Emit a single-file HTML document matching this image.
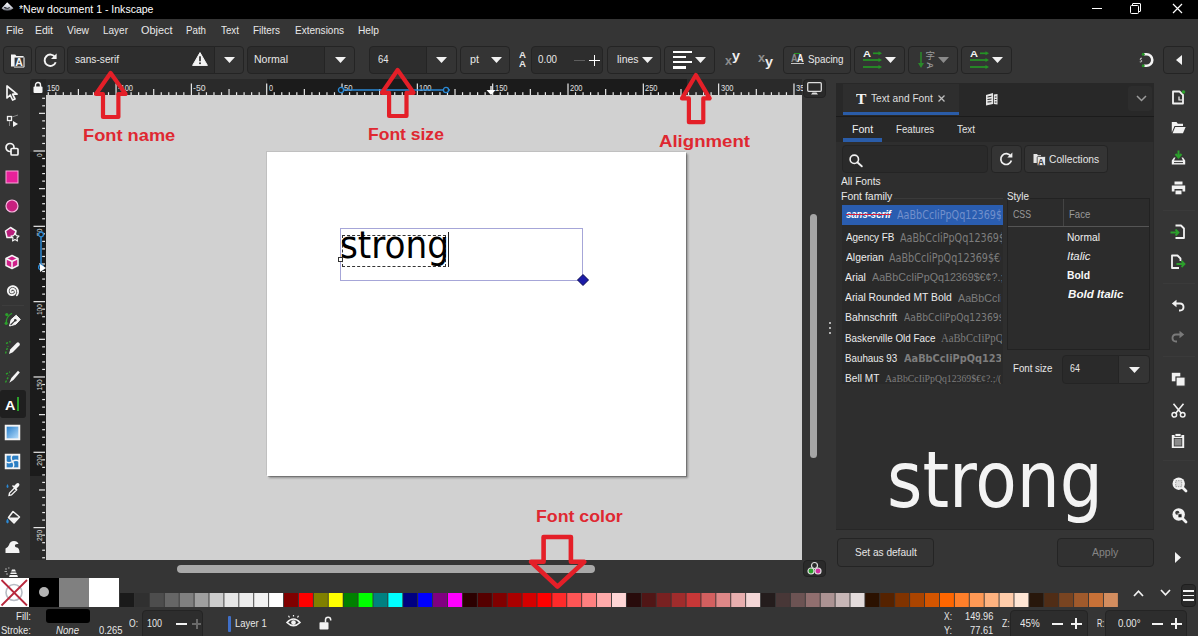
<!DOCTYPE html>
<html lang="en">
<head>
<meta charset="utf-8">
<title>Inkscape - Text and Font</title>
<style>
*{box-sizing:border-box;margin:0;padding:0}
html,body{width:1200px;height:636px;overflow:hidden;background:#353535}
body{position:relative;font-family:"Liberation Sans","DejaVu Sans",sans-serif;font-size:12px;color:#e8e8e8}
div,span,svg{position:absolute}
svg{overflow:visible}
.f{white-space:nowrap;transform-origin:0 50%}
.btn{background:#343434;border:1px solid #242424;border-radius:4px}
</style>
</head>
<body>
<div style="left:0px;top:0px;width:1198px;height:19px;background:#000;"></div>
<div style="left:1198px;top:0px;width:2px;height:636px;background:#353535;"></div>
<svg style="left:0px;top:0px;" width="16" height="14" viewBox="0 0 16 14"><defs><linearGradient id="lg0" x1="0" y1="0" x2="0" y2="1"><stop offset="0" stop-color="#ffffff"/><stop offset=".65" stop-color="#c9ccd6"/><stop offset="1" stop-color="#4a4d55"/></linearGradient></defs><path d="M7.2 2.2 L13.4 8.2 Q10.5 10.9 7.3 10.7 Q4 10.9 1.6 8.2 Z" fill="url(#lg0)"/><path d="M3.6 7.6 Q5 6.6 6.2 7.6 Q7.4 8.4 8.6 7.5 Q9.6 6.9 10.2 7.8 Q8 9 6.5 8.6 Q5 8.8 3.6 7.6 Z" fill="#15161c"/></svg>
<span class="f" style="left:18.5px;top:2px;font-size:11px;line-height:14px;transform:scaleX(0.956);color:#fff;">*New document 1 - Inkscape</span>
<div style="left:1092px;top:8px;width:10px;height:1px;background:#fff;"></div>
<svg style="left:1130px;top:3px;" width="11" height="11" viewBox="0 0 11 11"><path d="M2.5 2.5 V1 Q2.5 .5 3 .5 H10 Q10.5 .5 10.5 1 V8 Q10.5 8.5 10 8.5 H8.5" fill="none" stroke="#fff" stroke-width="1"/><rect x=".5" y="2.5" width="8" height="8" rx="1" fill="none" stroke="#fff" stroke-width="1"/></svg>
<svg style="left:1172px;top:3px;" width="11" height="11" viewBox="0 0 11 11"><path d="M1 1 L10 10 M10 1 L1 10" stroke="#fff" stroke-width="1.2"/></svg>
<div style="left:0px;top:19px;width:1198px;height:23px;background:#353535;"></div>
<span class="f" style="left:5.5px;top:23px;font-size:11px;line-height:14px;transform:scaleX(0.987);">File</span>
<span class="f" style="left:35px;top:23px;font-size:11px;line-height:14px;transform:scaleX(0.950);">Edit</span>
<span class="f" style="left:66.5px;top:23px;font-size:11px;line-height:14px;transform:scaleX(0.930);">View</span>
<span class="f" style="left:103px;top:23px;font-size:11px;line-height:14px;transform:scaleX(0.909);">Layer</span>
<span class="f" style="left:141px;top:23px;font-size:11px;line-height:14px;transform:scaleX(0.991);">Object</span>
<span class="f" style="left:186px;top:23px;font-size:11px;line-height:14px;transform:scaleX(0.884);">Path</span>
<span class="f" style="left:220.5px;top:23px;font-size:11px;line-height:14px;transform:scaleX(0.892);">Text</span>
<span class="f" style="left:253px;top:23px;font-size:11px;line-height:14px;transform:scaleX(0.902);">Filters</span>
<span class="f" style="left:294.5px;top:23px;font-size:11px;line-height:14px;transform:scaleX(0.911);">Extensions</span>
<span class="f" style="left:358px;top:23px;font-size:11px;line-height:14px;transform:scaleX(0.928);">Help</span>
<div style="left:0px;top:42px;width:1198px;height:37px;background:#353535;"></div>
<div class="btn" style="left:3px;top:46px;width:29px;height:28px;"></div>
<div class="btn" style="left:35px;top:46px;width:30px;height:28px;"></div>
<div class="btn" style="left:67px;top:46px;width:148px;height:28px;border-radius:4px 0 0 4px;background:#2d2d2d;"></div>
<div class="btn" style="left:214px;top:46px;width:30px;height:28px;border-radius:0 4px 4px 0"></div>
<span class="f" style="left:75px;top:52px;font-size:11px;line-height:14px;transform:scaleX(0.923);">sans-serif</span>
<svg style="left:223.5px;top:57.0px;" width="11" height="6" viewBox="0 0 11 6"><path d="M0 0 H11 L5.5 6 Z" fill="#f2f2f2"/></svg>
<div class="btn" style="left:247px;top:46px;width:78px;height:28px;border-radius:4px 0 0 4px;background:#2d2d2d;"></div>
<div class="btn" style="left:324px;top:46px;width:31px;height:28px;border-radius:0 4px 4px 0"></div>
<span class="f" style="left:254px;top:52px;font-size:11px;line-height:14px;transform:scaleX(0.959);">Normal</span>
<svg style="left:334.5px;top:57.0px;" width="11" height="6" viewBox="0 0 11 6"><path d="M0 0 H11 L5.5 6 Z" fill="#f2f2f2"/></svg>
<div class="btn" style="left:369px;top:46px;width:58px;height:28px;border-radius:4px 0 0 4px;background:#2d2d2d;"></div>
<div class="btn" style="left:426px;top:46px;width:31px;height:28px;border-radius:0 4px 4px 0"></div>
<span class="f" style="left:377.5px;top:52px;font-size:11px;line-height:14px;transform:scaleX(0.858);">64</span>
<svg style="left:435.5px;top:57.0px;" width="11" height="6" viewBox="0 0 11 6"><path d="M0 0 H11 L5.5 6 Z" fill="#f2f2f2"/></svg>
<div class="btn" style="left:460px;top:46px;width:50px;height:28px;"></div>
<span class="f" style="left:469.5px;top:52px;font-size:11px;line-height:14px;transform:scaleX(0.981);">pt</span>
<svg style="left:490.5px;top:57.0px;" width="11" height="6" viewBox="0 0 11 6"><path d="M0 0 H11 L5.5 6 Z" fill="#f2f2f2"/></svg>
<span class="f" style="left:518.5px;top:49px;font-size:9px;line-height:12px;transform:scaleX(1.077);font-weight:bold;">A</span>
<span class="f" style="left:518.5px;top:58px;font-size:9px;line-height:12px;transform:scaleX(1.077);font-weight:bold;">A</span>
<div class="btn" style="left:531px;top:46px;width:72px;height:28px;background:#2d2d2d;"></div>
<span class="f" style="left:537.5px;top:52px;font-size:11px;line-height:14px;transform:scaleX(0.887);">0.00</span>
<div style="left:574px;top:59.7px;width:11px;height:1.6px;background:#5e5e5e;"></div>
<div style="left:589px;top:59.7px;width:11px;height:1.7px;background:#fff;"></div>
<div style="left:593.6px;top:55px;width:1.7px;height:11px;background:#fff;"></div>
<div class="btn" style="left:607px;top:46px;width:54px;height:28px;"></div>
<span class="f" style="left:616.5px;top:52px;font-size:11px;line-height:14px;transform:scaleX(0.950);">lines</span>
<svg style="left:641.5px;top:57.0px;" width="11" height="6" viewBox="0 0 11 6"><path d="M0 0 H11 L5.5 6 Z" fill="#f2f2f2"/></svg>
<div class="btn" style="left:664px;top:46px;width:51px;height:28px;"></div>
<div style="left:673px;top:50.8px;width:19px;height:2.4px;background:#fff;"></div>
<div style="left:673px;top:55.949999999999996px;width:13px;height:2.4px;background:#fff;"></div>
<div style="left:673px;top:61.099999999999994px;width:19px;height:2.4px;background:#fff;"></div>
<div style="left:673px;top:66.25px;width:13px;height:2.4px;background:#fff;"></div>
<svg style="left:695.0px;top:57.0px;" width="11" height="6" viewBox="0 0 11 6"><path d="M0 0 H11 L5.5 6 Z" fill="#f2f2f2"/></svg>
<span class="f" style="left:725px;top:53px;font-size:12px;line-height:16px;transform:scaleX(1.049);font-weight:bold;color:#8c8c8c;">x</span>
<span class="f" style="left:732px;top:48px;font-size:12px;line-height:16px;transform:scaleX(1.199);font-weight:bold;color:#eee;">y</span>
<span class="f" style="left:758px;top:50px;font-size:12px;line-height:16px;transform:scaleX(1.049);font-weight:bold;color:#8c8c8c;">x</span>
<span class="f" style="left:765px;top:54px;font-size:12px;line-height:16px;transform:scaleX(1.199);font-weight:bold;color:#eee;">y</span>
<div class="btn" style="left:783px;top:46px;width:68px;height:28px;"></div>
<span class="f" style="left:807.5px;top:52px;font-size:11px;line-height:14px;transform:scaleX(0.893);">Spacing</span>
<div class="btn" style="left:854px;top:46px;width:51px;height:28px;"></div>
<div class="btn" style="left:908px;top:46px;width:50px;height:28px;"></div>
<div class="btn" style="left:961px;top:46px;width:51px;height:28px;"></div>
<svg style="left:884.5px;top:57.0px;" width="11" height="6" viewBox="0 0 11 6"><path d="M0 0 H11 L5.5 6 Z" fill="#f2f2f2"/></svg>
<svg style="left:937.5px;top:57.0px;" width="11" height="6" viewBox="0 0 11 6"><path d="M0 0 H11 L5.5 6 Z" fill="#8a8a8a"/></svg>
<svg style="left:991.5px;top:57.0px;" width="11" height="6" viewBox="0 0 11 6"><path d="M0 0 H11 L5.5 6 Z" fill="#f2f2f2"/></svg>
<div class="btn" style="left:1163px;top:46px;width:31px;height:28px;"></div>
<svg style="left:1175.7px;top:55px;" width="6" height="10" viewBox="0 0 6 10"><path d="M6 0 V10 L0 5 Z" fill="#f2f2f2"/></svg>
<div style="left:0px;top:79px;width:26px;height:499px;background:#353535;"></div>
<div style="left:0px;top:390px;width:26px;height:28px;background:#1f1f1f;border-radius:3px"></div>
<div style="left:2px;top:305px;width:22px;height:1px;background:#3d3d3d;"></div>
<svg style="left:4px;top:85px;" width="16" height="16" viewBox="0 0 16 16"><path d="M3 1 L3 13 L6.2 10 L8.6 15 L11 14 L8.6 9.2 L13 9.2 Z" fill="none" stroke="#f4f4f4" stroke-width="1.7" stroke-linejoin="round"/></svg>
<svg style="left:4px;top:113px;" width="16" height="16" viewBox="0 0 16 16"><rect x="3.5" y="3.5" width="4" height="4" fill="none" stroke="#f4f4f4" stroke-width="1.3"/><path d="M5.5 8 V13 M8 4 Q11 3 14 2" stroke="#888" stroke-width="1" fill="none"/><path d="M9 8 L14 11 L9 14 Z" fill="#f4f4f4"/></svg>
<svg style="left:4px;top:141px;" width="16" height="16" viewBox="0 0 16 16"><circle cx="6" cy="6.5" r="4" fill="none" stroke="#f4f4f4" stroke-width="1.7"/><rect x="7" y="7.5" width="7" height="6.5" rx="1" fill="#353535" stroke="#f4f4f4" stroke-width="1.7"/></svg>
<svg style="left:4px;top:169px;" width="16" height="16" viewBox="0 0 16 16"><rect x="2" y="2" width="12" height="12" fill="#e8209a" stroke="#f8a8d8" stroke-width="1"/></svg>
<svg style="left:4px;top:198px;" width="16" height="16" viewBox="0 0 16 16"><circle cx="8" cy="8" r="6" fill="#c8207f" stroke="#f8b8e0" stroke-width="1.2"/></svg>
<svg style="left:4px;top:226px;" width="16" height="16" viewBox="0 0 16 16"><path d="M6.5 1.5 L12 5 L10.5 11.5 L3 11.5 L1.5 5 Z" fill="#b81f7c" stroke="#f4f4f4" stroke-width="1.5" stroke-linejoin="round"/><path d="M11 7 L12.3 9.6 L15 10 L13 12 L13.5 15 L11 13.5 L8.5 15 L9 12 L7 10 L9.7 9.6 Z" fill="#353535" stroke="#f4f4f4" stroke-width="1.1" stroke-linejoin="round"/></svg>
<svg style="left:4px;top:254px;" width="16" height="16" viewBox="0 0 16 16"><path d="M8 1.5 L14 4.5 V11.5 L8 14.5 L2 11.5 V4.5 Z" fill="#d0208a" stroke="#f4f4f4" stroke-width="1.5" stroke-linejoin="round"/><path d="M2 4.5 L8 7.5 L14 4.5 M8 7.5 V14.5" fill="none" stroke="#f4f4f4" stroke-width="1.5"/></svg>
<svg style="left:4px;top:283px;" width="16" height="16" viewBox="0 0 16 16"><path d="M8.94 8.57 L8.95 8.64 L8.95 8.72 L8.94 8.79 L8.92 8.87 L8.89 8.95 L8.86 9.02 L8.81 9.10 L8.76 9.17 L8.69 9.24 L8.62 9.30 L8.54 9.36 L8.46 9.41 L8.36 9.46 L8.26 9.49 L8.16 9.52 L8.05 9.54 L7.93 9.54 L7.81 9.54 L7.69 9.53 L7.57 9.50 L7.45 9.46 L7.33 9.41 L7.21 9.35 L7.10 9.27 L6.99 9.19 L6.89 9.09 L6.79 8.98 L6.71 8.86 L6.63 8.73 L6.57 8.59 L6.51 8.44 L6.47 8.29 L6.45 8.13 L6.43 7.96 L6.43 7.80 L6.45 7.63 L6.48 7.45 L6.53 7.28 L6.60 7.12 L6.68 6.95 L6.77 6.79 L6.89 6.64 L7.01 6.50 L7.16 6.36 L7.31 6.24 L7.48 6.13 L7.66 6.03 L7.85 5.95 L8.05 5.89 L8.25 5.84 L8.47 5.81 L8.69 5.80 L8.91 5.81 L9.13 5.83 L9.35 5.88 L9.57 5.95 L9.79 6.04 L10.00 6.15 L10.20 6.28 L10.39 6.42 L10.58 6.59 L10.74 6.77 L10.90 6.97 L11.03 7.18 L11.15 7.41 L11.25 7.65 L11.33 7.90 L11.39 8.16 L11.43 8.43 L11.44 8.70 L11.43 8.98 L11.39 9.25 L11.33 9.53 L11.25 9.80 L11.14 10.07 L11.00 10.32 L10.84 10.57 L10.66 10.81 L10.46 11.03 L10.24 11.23 L10.00 11.42 L9.74 11.59 L9.46 11.73 L9.17 11.85 L8.87 11.95 L8.56 12.02 L8.24 12.06 L7.91 12.08 L7.58 12.07 L7.25 12.02 L6.92 11.95 L6.60 11.85 L6.28 11.73 L5.98 11.57 L5.68 11.38 L5.40 11.17 L5.14 10.94 L4.90 10.68 L4.68 10.39 L4.48 10.09 L4.30 9.77 L4.16 9.43 L4.04 9.08 L3.96 8.71 L3.90 8.34 L3.88 7.96 L3.89 7.57 L3.94 7.19 L4.01 6.81 L4.13 6.43 L4.27 6.06 L4.45 5.71 L4.66 5.36 L4.90 5.04 L5.17 4.73 L5.46 4.45 L5.79 4.19 L6.13 3.96 L6.50 3.75 L6.89 3.58 L7.29 3.44 L7.70 3.34 L8.13 3.27 L8.56 3.24 L9.00 3.25 L9.44 3.29 L9.88 3.38 L10.31 3.50 L10.73 3.65 L11.14 3.85 L11.53 4.08 L11.90 4.35 L12.25 4.65 L12.58 4.98 L12.88 5.34 L13.15 5.73 L13.38 6.14 L13.58 6.57 L13.75 7.02 L13.87 7.49 L13.95 7.97 L14.00 8.45 L14.00 8.95 L13.96 9.44 L13.87 9.93 L13.74 10.42 L13.57 10.89 L13.36 11.35 L13.11 11.79 L12.82 12.22" fill="none" stroke="#f4f4f4" stroke-width="1.9" stroke-linecap="round"/></svg>
<svg style="left:3px;top:310px;" width="18" height="18" viewBox="0 0 18 18"><path d="M3.2 13 Q3 6.5 9 3.2" fill="none" stroke="#2ca02c" stroke-width="1.3"/><circle cx="3.2" cy="13.3" r="1.6" fill="#2ca02c"/><circle cx="3.8" cy="4.6" r="1.6" fill="#2ca02c"/><path d="M6.6 16 L8.2 9.6 L13.2 5.2 L17.3 9.4 L12.8 14.3 Z" fill="#f4f4f4" stroke="#f4f4f4" stroke-width="1" stroke-linejoin="round"/><path d="M7.6 15 L12 10.6" stroke="#353535" stroke-width="1.2"/><circle cx="12.3" cy="10.2" r="1.3" fill="#353535"/></svg>
<svg style="left:3px;top:338px;" width="18" height="18" viewBox="0 0 18 18"><path d="M2.5 15.5 L5 8 M3 5.5 L7.5 3.5" stroke="#2ca02c" stroke-width="1.4" stroke-dasharray="2.2 1.4" fill="none"/><path d="M6 16 L7.2 11.4 L13.8 4.8 Q15 3.8 16.3 5 Q17.5 6.3 16.4 7.5 L9.8 14.2 Z" fill="#f4f4f4"/></svg>
<svg style="left:3px;top:367px;" width="18" height="18" viewBox="0 0 18 18"><path d="M2.5 15.5 L6 8.5 M3 7 L7 5" stroke="#2ca02c" stroke-width="1.4" stroke-dasharray="2.2 1.4" fill="none"/><path d="M6.3 15.8 L8.4 11 L15 3.8 L16.8 5.6 L10.4 13 Z" fill="#f4f4f4"/></svg>
<span class="f" style="left:5.2px;top:398px;font-size:12px;line-height:16px;transform:scaleX(1.200);font-weight:bold;color:#fff;">A</span>
<div style="left:17.3px;top:397px;width:2px;height:14px;background:#2ca02c;"></div>
<svg style="left:4px;top:424px;" width="17" height="17" viewBox="0 0 17 17"><defs><linearGradient id="gg" x1="0" y1="0" x2="1" y2="1"><stop offset="0" stop-color="#1d78c8"/><stop offset="1" stop-color="#bfe3ff"/></linearGradient></defs><rect x="1.7" y="1.7" width="13.6" height="13.6" fill="url(#gg)" stroke="#f4f4f4" stroke-width="1.9"/></svg>
<svg style="left:4px;top:453px;" width="17" height="17" viewBox="0 0 17 17"><rect x="1.7" y="1.7" width="13.6" height="13.6" fill="#2b7fc4" stroke="#f4f4f4" stroke-width="1.9"/><path d="M8.5 1.5 Q6 5 8.5 8.5 Q11 12 8.5 15.5 M1.5 8.5 Q5 11 8.5 8.5 Q12 6 15.5 8.5" fill="none" stroke="#f4f4f4" stroke-width="1.4"/></svg>
<svg style="left:4px;top:481px;" width="17" height="17" viewBox="0 0 17 17"><path d="M3.5 3 Q1.5 6 3.5 7 Q5.5 6 3.5 3 Z" fill="#2b8ad6"/><path d="M5 14.5 L5.5 12 L10.5 7 L12.5 9 L7.5 14 Z" fill="none" stroke="#f4f4f4" stroke-width="1.3"/><path d="M10 5 L12.5 2.5 Q14 1.5 15 2.5 Q16 3.5 15 5 L12.5 7.5 L13.5 8.5 L12.5 9.5 L8 5 L9 4 Z" fill="#f4f4f4"/></svg>
<svg style="left:4px;top:509px;" width="17" height="17" viewBox="0 0 17 17"><path d="M3.5 9.5 Q1 13.5 3.5 14.5 Q6 13.5 3.5 9.5 Z" fill="#2b8ad6"/><path d="M9 2.5 L15.5 8 L10 14 L4.5 8.5 Z" fill="none" stroke="#f4f4f4" stroke-width="1.5" stroke-linejoin="round"/><path d="M5 8.5 L15 8.5 L10 13.5 Z" fill="#f4f4f4"/></svg>
<svg style="left:4px;top:538px;" width="17" height="17" viewBox="0 0 17 17"><path d="M1.5 15 V10.5 Q4 9.5 5 7 Q6 3 10 3 Q13.5 3 14.5 6 Q12 5.5 11 7 Q10.5 9 13 9.5 Q15.5 10 15.5 15 Z" fill="#f4f4f4"/></svg>
<svg style="left:3px;top:566px;" width="18" height="12" viewBox="0 0 18 12"><path d="M9 3.5 L12 3.5 L15 11 L6 11 Z" fill="#f4f4f4"/><path d="M7.5 6 H13.5 M6.8 8.5 H14.2" stroke="#353535" stroke-width="1"/><path d="M2 3 h2 M1.5 5.5 h2.5 M3 8 h2 M5 2 h1.5" stroke="#aaa" stroke-width="1"/></svg>
<div style="left:30px;top:79.3px;width:16px;height:15.7px;background:#262626;border-radius:3px 0 0 0"></div>
<svg style="left:33px;top:81px;" width="10" height="12" viewBox="0 0 10 12"><path d="M2.5 6 V4 a2.5 2.5 0 0 1 5 0 V6" fill="none" stroke="#f4f4f4" stroke-width="1.4"/><rect x="0.5" y="5.5" width="9" height="6.5" rx="1" fill="#f4f4f4"/></svg>
<div style="left:45.6px;top:79.3px;width:756.4px;height:15.7px;background:#2a2a2a;"></div>
<div style="left:267px;top:79.3px;width:420px;height:15.7px;background:#1b1b1b;"></div>
<div style="left:30px;top:95px;width:15.6px;height:465px;background:#2a2a2a;"></div>
<div style="left:30px;top:151.6px;width:15.6px;height:324.4px;background:#1b1b1b;"></div>
<svg style="left:45px;top:80px;" width="757" height="15" viewBox="0 0 757 15"><g fill="#e8e8e8"><rect x="2.66" y="12.2" width="1.2" height="2.8"/><rect x="10.19" y="12.2" width="1.2" height="2.8"/><rect x="17.72" y="12.2" width="1.2" height="2.8"/><rect x="25.25" y="12.2" width="1.2" height="2.8"/><rect x="32.79" y="9" width="1.2" height="6"/><rect x="40.32" y="12.2" width="1.2" height="2.8"/><rect x="47.85" y="12.2" width="1.2" height="2.8"/><rect x="55.38" y="12.2" width="1.2" height="2.8"/><rect x="62.92" y="12.2" width="1.2" height="2.8"/><rect x="70.45" y="3.5" width="1.2" height="11.5"/><rect x="77.98" y="12.2" width="1.2" height="2.8"/><rect x="85.51" y="12.2" width="1.2" height="2.8"/><rect x="93.05" y="12.2" width="1.2" height="2.8"/><rect x="100.58" y="12.2" width="1.2" height="2.8"/><rect x="108.11" y="9" width="1.2" height="6"/><rect x="115.65" y="12.2" width="1.2" height="2.8"/><rect x="123.18" y="12.2" width="1.2" height="2.8"/><rect x="130.71" y="12.2" width="1.2" height="2.8"/><rect x="138.24" y="12.2" width="1.2" height="2.8"/><rect x="145.78" y="3.5" width="1.2" height="11.5"/><rect x="153.31" y="12.2" width="1.2" height="2.8"/><rect x="160.84" y="12.2" width="1.2" height="2.8"/><rect x="168.37" y="12.2" width="1.2" height="2.8"/><rect x="175.91" y="12.2" width="1.2" height="2.8"/><rect x="183.44" y="9" width="1.2" height="6"/><rect x="190.97" y="12.2" width="1.2" height="2.8"/><rect x="198.50" y="12.2" width="1.2" height="2.8"/><rect x="206.03" y="12.2" width="1.2" height="2.8"/><rect x="213.57" y="12.2" width="1.2" height="2.8"/><rect x="221.10" y="3.5" width="1.2" height="11.5"/><rect x="228.63" y="12.2" width="1.2" height="2.8"/><rect x="236.16" y="12.2" width="1.2" height="2.8"/><rect x="243.70" y="12.2" width="1.2" height="2.8"/><rect x="251.23" y="12.2" width="1.2" height="2.8"/><rect x="258.76" y="9" width="1.2" height="6"/><rect x="266.29" y="12.2" width="1.2" height="2.8"/><rect x="273.83" y="12.2" width="1.2" height="2.8"/><rect x="281.36" y="12.2" width="1.2" height="2.8"/><rect x="288.89" y="12.2" width="1.2" height="2.8"/><rect x="296.42" y="3.5" width="1.2" height="11.5"/><rect x="303.96" y="12.2" width="1.2" height="2.8"/><rect x="311.49" y="12.2" width="1.2" height="2.8"/><rect x="319.02" y="12.2" width="1.2" height="2.8"/><rect x="326.55" y="12.2" width="1.2" height="2.8"/><rect x="334.09" y="9" width="1.2" height="6"/><rect x="341.62" y="12.2" width="1.2" height="2.8"/><rect x="349.15" y="12.2" width="1.2" height="2.8"/><rect x="356.68" y="12.2" width="1.2" height="2.8"/><rect x="364.22" y="12.2" width="1.2" height="2.8"/><rect x="371.75" y="3.5" width="1.2" height="11.5"/><rect x="379.28" y="12.2" width="1.2" height="2.8"/><rect x="386.81" y="12.2" width="1.2" height="2.8"/><rect x="394.35" y="12.2" width="1.2" height="2.8"/><rect x="401.88" y="12.2" width="1.2" height="2.8"/><rect x="409.41" y="9" width="1.2" height="6"/><rect x="416.94" y="12.2" width="1.2" height="2.8"/><rect x="424.48" y="12.2" width="1.2" height="2.8"/><rect x="432.01" y="12.2" width="1.2" height="2.8"/><rect x="439.54" y="12.2" width="1.2" height="2.8"/><rect x="447.07" y="3.5" width="1.2" height="11.5"/><rect x="454.61" y="12.2" width="1.2" height="2.8"/><rect x="462.14" y="12.2" width="1.2" height="2.8"/><rect x="469.67" y="12.2" width="1.2" height="2.8"/><rect x="477.21" y="12.2" width="1.2" height="2.8"/><rect x="484.74" y="9" width="1.2" height="6"/><rect x="492.27" y="12.2" width="1.2" height="2.8"/><rect x="499.80" y="12.2" width="1.2" height="2.8"/><rect x="507.33" y="12.2" width="1.2" height="2.8"/><rect x="514.87" y="12.2" width="1.2" height="2.8"/><rect x="522.40" y="3.5" width="1.2" height="11.5"/><rect x="529.93" y="12.2" width="1.2" height="2.8"/><rect x="537.47" y="12.2" width="1.2" height="2.8"/><rect x="545.00" y="12.2" width="1.2" height="2.8"/><rect x="552.53" y="12.2" width="1.2" height="2.8"/><rect x="560.06" y="9" width="1.2" height="6"/><rect x="567.59" y="12.2" width="1.2" height="2.8"/><rect x="575.13" y="12.2" width="1.2" height="2.8"/><rect x="582.66" y="12.2" width="1.2" height="2.8"/><rect x="590.19" y="12.2" width="1.2" height="2.8"/><rect x="597.73" y="3.5" width="1.2" height="11.5"/><rect x="605.26" y="12.2" width="1.2" height="2.8"/><rect x="612.79" y="12.2" width="1.2" height="2.8"/><rect x="620.32" y="12.2" width="1.2" height="2.8"/><rect x="627.85" y="12.2" width="1.2" height="2.8"/><rect x="635.39" y="9" width="1.2" height="6"/><rect x="642.92" y="12.2" width="1.2" height="2.8"/><rect x="650.45" y="12.2" width="1.2" height="2.8"/><rect x="657.99" y="12.2" width="1.2" height="2.8"/><rect x="665.52" y="12.2" width="1.2" height="2.8"/><rect x="673.05" y="3.5" width="1.2" height="11.5"/><rect x="680.58" y="12.2" width="1.2" height="2.8"/><rect x="688.11" y="12.2" width="1.2" height="2.8"/><rect x="695.65" y="12.2" width="1.2" height="2.8"/><rect x="703.18" y="12.2" width="1.2" height="2.8"/><rect x="710.71" y="9" width="1.2" height="6"/><rect x="718.25" y="12.2" width="1.2" height="2.8"/><rect x="725.78" y="12.2" width="1.2" height="2.8"/><rect x="733.31" y="12.2" width="1.2" height="2.8"/><rect x="740.84" y="12.2" width="1.2" height="2.8"/><rect x="748.37" y="3.5" width="1.2" height="11.5"/></g></svg>
<span class="f" style="left:46.7px;top:83px;font-size:8.5px;line-height:11px;transform:scaleX(0.881);color:#e0e0e0;">150</span>
<span class="f" style="left:118.0px;top:83px;font-size:8.5px;line-height:11px;transform:scaleX(0.882);color:#e0e0e0;">-100</span>
<span class="f" style="left:193.4px;top:83px;font-size:8.5px;line-height:11px;transform:scaleX(1.017);color:#e0e0e0;">-50</span>
<span class="f" style="left:268.7px;top:83px;font-size:8.5px;line-height:11px;transform:scaleX(0.846);color:#e0e0e0;">0</span>
<span class="f" style="left:344.0px;top:83px;font-size:8.5px;line-height:11px;transform:scaleX(0.899);color:#e0e0e0;">50</span>
<span class="f" style="left:419.4px;top:83px;font-size:8.5px;line-height:11px;transform:scaleX(0.881);color:#e0e0e0;">100</span>
<span class="f" style="left:494.7px;top:83px;font-size:8.5px;line-height:11px;transform:scaleX(0.881);color:#e0e0e0;">150</span>
<span class="f" style="left:570.0px;top:83px;font-size:8.5px;line-height:11px;transform:scaleX(0.881);color:#e0e0e0;">200</span>
<span class="f" style="left:645.3px;top:83px;font-size:8.5px;line-height:11px;transform:scaleX(0.881);color:#e0e0e0;">250</span>
<span class="f" style="left:720.6px;top:83px;font-size:8.5px;line-height:11px;transform:scaleX(0.881);color:#e0e0e0;">300</span>
<span class="f" style="left:796.0px;top:83px;font-size:8.5px;line-height:11px;transform:scaleX(0.899);color:#e0e0e0;">35</span>
<svg style="left:30px;top:95px;" width="15" height="465" viewBox="0 0 15 465"><g fill="#e8e8e8"><rect y="2.67" x="12.2" height="1.2" width="2.8"/><rect y="10.21" x="12.2" height="1.2" width="2.8"/><rect y="17.74" x="9" height="1.2" width="6"/><rect y="25.27" x="12.2" height="1.2" width="2.8"/><rect y="32.80" x="12.2" height="1.2" width="2.8"/><rect y="40.34" x="12.2" height="1.2" width="2.8"/><rect y="47.87" x="12.2" height="1.2" width="2.8"/><rect y="55.40" x="3.5" height="1.2" width="11.5"/><rect y="62.93" x="12.2" height="1.2" width="2.8"/><rect y="70.47" x="12.2" height="1.2" width="2.8"/><rect y="78.00" x="12.2" height="1.2" width="2.8"/><rect y="85.53" x="12.2" height="1.2" width="2.8"/><rect y="93.06" x="9" height="1.2" width="6"/><rect y="100.59" x="12.2" height="1.2" width="2.8"/><rect y="108.13" x="12.2" height="1.2" width="2.8"/><rect y="115.66" x="12.2" height="1.2" width="2.8"/><rect y="123.19" x="12.2" height="1.2" width="2.8"/><rect y="130.72" x="3.5" height="1.2" width="11.5"/><rect y="138.26" x="12.2" height="1.2" width="2.8"/><rect y="145.79" x="12.2" height="1.2" width="2.8"/><rect y="153.32" x="12.2" height="1.2" width="2.8"/><rect y="160.85" x="12.2" height="1.2" width="2.8"/><rect y="168.39" x="9" height="1.2" width="6"/><rect y="175.92" x="12.2" height="1.2" width="2.8"/><rect y="183.45" x="12.2" height="1.2" width="2.8"/><rect y="190.99" x="12.2" height="1.2" width="2.8"/><rect y="198.52" x="12.2" height="1.2" width="2.8"/><rect y="206.05" x="3.5" height="1.2" width="11.5"/><rect y="213.58" x="12.2" height="1.2" width="2.8"/><rect y="221.12" x="12.2" height="1.2" width="2.8"/><rect y="228.65" x="12.2" height="1.2" width="2.8"/><rect y="236.18" x="12.2" height="1.2" width="2.8"/><rect y="243.71" x="9" height="1.2" width="6"/><rect y="251.25" x="12.2" height="1.2" width="2.8"/><rect y="258.78" x="12.2" height="1.2" width="2.8"/><rect y="266.31" x="12.2" height="1.2" width="2.8"/><rect y="273.84" x="12.2" height="1.2" width="2.8"/><rect y="281.38" x="3.5" height="1.2" width="11.5"/><rect y="288.91" x="12.2" height="1.2" width="2.8"/><rect y="296.44" x="12.2" height="1.2" width="2.8"/><rect y="303.97" x="12.2" height="1.2" width="2.8"/><rect y="311.50" x="12.2" height="1.2" width="2.8"/><rect y="319.04" x="9" height="1.2" width="6"/><rect y="326.57" x="12.2" height="1.2" width="2.8"/><rect y="334.10" x="12.2" height="1.2" width="2.8"/><rect y="341.63" x="12.2" height="1.2" width="2.8"/><rect y="349.17" x="12.2" height="1.2" width="2.8"/><rect y="356.70" x="3.5" height="1.2" width="11.5"/><rect y="364.23" x="12.2" height="1.2" width="2.8"/><rect y="371.76" x="12.2" height="1.2" width="2.8"/><rect y="379.30" x="12.2" height="1.2" width="2.8"/><rect y="386.83" x="12.2" height="1.2" width="2.8"/><rect y="394.36" x="9" height="1.2" width="6"/><rect y="401.89" x="12.2" height="1.2" width="2.8"/><rect y="409.43" x="12.2" height="1.2" width="2.8"/><rect y="416.96" x="12.2" height="1.2" width="2.8"/><rect y="424.49" x="12.2" height="1.2" width="2.8"/><rect y="432.02" x="3.5" height="1.2" width="11.5"/><rect y="439.56" x="12.2" height="1.2" width="2.8"/><rect y="447.09" x="12.2" height="1.2" width="2.8"/><rect y="454.62" x="12.2" height="1.2" width="2.8"/><rect y="462.15" x="12.2" height="1.2" width="2.8"/></g></svg>
<svg style="left:30px;top:95px;" width="15" height="465" viewBox="0 0 15 465"><text transform="translate(11.6 62.0) rotate(-90)" font-size="7.2" fill="#e0e0e0" font-family="Liberation Sans, sans-serif" textLength="3.7" lengthAdjust="spacingAndGlyphs">0</text><text transform="translate(11.6 141.0) rotate(-90)" font-size="7.2" fill="#e0e0e0" font-family="Liberation Sans, sans-serif" textLength="7.4" lengthAdjust="spacingAndGlyphs">50</text><text transform="translate(11.6 220.1) rotate(-90)" font-size="7.2" fill="#e0e0e0" font-family="Liberation Sans, sans-serif" textLength="11.1" lengthAdjust="spacingAndGlyphs">100</text><text transform="translate(11.6 295.4) rotate(-90)" font-size="7.2" fill="#e0e0e0" font-family="Liberation Sans, sans-serif" textLength="11.1" lengthAdjust="spacingAndGlyphs">150</text><text transform="translate(11.6 370.7) rotate(-90)" font-size="7.2" fill="#e0e0e0" font-family="Liberation Sans, sans-serif" textLength="11.1" lengthAdjust="spacingAndGlyphs">200</text><text transform="translate(11.6 446.0) rotate(-90)" font-size="7.2" fill="#e0e0e0" font-family="Liberation Sans, sans-serif" textLength="11.1" lengthAdjust="spacingAndGlyphs">250</text></svg>
<div style="left:45.6px;top:95px;width:756.4px;height:465px;background:#d1d1d1;"></div>
<div style="left:266.8px;top:151.6px;width:419.4px;height:324.2px;background:#fff;box-shadow:1px 1px 0 rgba(0,0,0,.2),2px 2px 2px rgba(0,0,0,.32),-1px -1px 0 rgba(0,0,0,.08)"></div>
<div style="left:339.5px;top:228px;width:243.5px;height:52.5px;background:transparent;border:1px solid #a6a6d8"></div>
<div style="left:342px;top:235px;width:104px;height:31.5px;background:transparent;border:1px dashed #333"></div>
<span class="f" style="left:340.3px;top:221px;font-size:38px;line-height:49px;transform:scaleX(1.003);font-family:'DejaVu Sans Condensed','DejaVu Sans',sans-serif;color:#000;">strong</span>
<div style="left:448px;top:232px;width:1.3px;height:34.5px;background:#222;"></div>
<div style="left:337.5px;top:256.5px;width:5px;height:5px;background:#fff;border:1px solid #333"></div>
<svg style="left:577px;top:274px;" width="12" height="12" viewBox="0 0 12 12"><path d="M6 0.5 L11.5 6 L6 11.5 L0.5 6 Z" fill="#1c1ca8" stroke="#0a0a50" stroke-width="1"/></svg>
<svg style="left:337px;top:84.4px;" width="118" height="12" viewBox="0 0 118 12"><path d="M4 6 H113" stroke="#2b8ad6" stroke-width="1.5"/><circle cx="4" cy="6" r="2.6" fill="#1b1b1b" stroke="#2b8ad6" stroke-width="1.3"/><circle cx="109" cy="6" r="2.6" fill="#1b1b1b" stroke="#2b8ad6" stroke-width="1.3"/></svg>
<svg style="left:37px;top:228.6px;" width="10" height="46" viewBox="0 0 10 46"><path d="M4 5.4 V38.4" stroke="#2b8ad6" stroke-width="1.5"/><circle cx="4" cy="5.4" r="2.4" fill="#1b1b1b" stroke="#2b8ad6" stroke-width="1.3"/><circle cx="4" cy="38.4" r="2.4" fill="#1b1b1b" stroke="#2b8ad6" stroke-width="1.3"/></svg>
<svg style="left:486px;top:86px;" width="10" height="9" viewBox="0 0 10 9"><path d="M5 0 V5" stroke="#fff" stroke-width="1.3"/><path d="M0.5 4 H9.5 L5 9 Z" fill="#fff"/></svg>
<svg style="left:40px;top:264px;" width="6" height="8" viewBox="0 0 6 8"><path d="M0 0 V8 L6 4 Z" fill="#fff"/></svg>
<div style="left:810px;top:214px;width:7px;height:244px;background:#a6a6a6;border-radius:4px"></div>
<div style="left:177px;top:565px;width:418px;height:7.5px;background:#a9a9a9;border-radius:4px"></div>
<div class="btn" style="left:803px;top:79px;width:23px;height:19px;background:#2a2a2a;border-color:#222"></div>
<svg style="left:807px;top:82px;" width="15" height="13" viewBox="0 0 15 13"><rect x="0.7" y="0.7" width="13.6" height="8.6" rx="1" fill="none" stroke="#ddd" stroke-width="1.3"/><path d="M4 12.5 H11 L9.5 10.5 H5.5 Z" fill="#ddd"/></svg>
<div class="btn" style="left:803px;top:560px;width:23px;height:17px;background:#2a2a2a;border-color:#222"></div>
<svg style="left:806px;top:561px;" width="17" height="15" viewBox="0 0 17 15"><circle cx="8.5" cy="4.5" r="3" fill="none" stroke="#ddd" stroke-width="1.2"/><circle cx="5" cy="10" r="3" fill="#2ca02c" stroke="#ddd" stroke-width="1.2"/><circle cx="12" cy="10" r="3" fill="#d030a0" stroke="#ddd" stroke-width="1.2"/></svg>
<div style="left:829px;top:322px;width:2.4px;height:2.4px;background:#ddd;border-radius:2px"></div>
<div style="left:829px;top:327px;width:2.4px;height:2.4px;background:#ddd;border-radius:2px"></div>
<div style="left:829px;top:332px;width:2.4px;height:2.4px;background:#ddd;border-radius:2px"></div>
<div style="left:836px;top:83px;width:317.5px;height:59px;background:#282828;"></div>
<div style="left:836px;top:141.5px;width:317.5px;height:388px;background:#2e2e2e;border-right:1px solid #2a2a2a;border-bottom:1px solid #272727"></div>
<div style="left:836px;top:115.5px;width:318px;height:1.2px;background:#1b1b1b;"></div>
<div style="left:843px;top:84px;width:115.5px;height:31px;background:#2e2e2e;"></div>
<div style="left:843px;top:111.5px;width:115.5px;height:3.8px;background:#2a5ca8;"></div>
<span class="f" style="left:855.6px;top:89px;font-size:15px;line-height:20px;transform:scaleX(1.039);font-family:'Liberation Serif',serif;font-weight:bold;color:#f4f4f4;">T</span>
<span class="f" style="left:870.6px;top:91px;font-size:11px;line-height:14px;transform:scaleX(0.927);color:#dedede;">Text and Font</span>
<svg style="left:937.5px;top:95.4px;" width="7" height="7" viewBox="0 0 7 7"><path d="M0.5 0.5 L6.5 6.5 M6.5 0.5 L0.5 6.5" stroke="#bdbdbd" stroke-width="1.3"/></svg>
<svg style="left:985px;top:92px;" width="13" height="14" viewBox="0 0 13 14"><path d="M1 3 L8 1 V12 L1 13.5 Z" fill="#e6e6e6"/><path d="M8.8 2.5 L12.5 2 V12.5 L8.8 12 Z" fill="#e6e6e6"/><path d="M2.5 5 L6.5 4.2 M2.5 7.5 L6.5 7 M2.5 10 L6.5 9.7 M9.8 5 H11.5 M9.8 7.5 H11.5 M9.8 10 H11.5" stroke="#262626" stroke-width="1"/></svg>
<div style="left:1127.7px;top:85.7px;width:24.5px;height:25.5px;background:#2d2d2d;border-radius:3px"></div>
<svg style="left:1136px;top:95px;" width="11" height="7" viewBox="0 0 11 7"><path d="M1 1 L5.5 5.5 L10 1" fill="none" stroke="#9c9c9c" stroke-width="1.5"/></svg>
<span class="f" style="left:852.4px;top:122px;font-size:11px;line-height:14px;transform:scaleX(0.959);color:#f0f0f0;">Font</span>
<span class="f" style="left:895.5px;top:122px;font-size:11px;line-height:14px;transform:scaleX(0.880);color:#e2e2e2;">Features</span>
<span class="f" style="left:957px;top:122px;font-size:11px;line-height:14px;transform:scaleX(0.892);color:#e2e2e2;">Text</span>
<div style="left:843px;top:138.2px;width:39px;height:3.6px;background:#2a5ca8;"></div>
<div class="btn" style="left:841.5px;top:144.5px;width:146px;height:28.5px;background:#2a2a2a"></div>
<svg style="left:849px;top:153.5px;" width="14" height="13" viewBox="0 0 14 13"><circle cx="5.3" cy="5.3" r="4.2" fill="none" stroke="#f0f0f0" stroke-width="1.6"/><path d="M8.3 8.3 L12.8 12.3" stroke="#f0f0f0" stroke-width="1.9" stroke-linecap="round"/></svg>
<div class="btn" style="left:990.5px;top:144.5px;width:31px;height:28.5px;"></div>
<svg style="left:999px;top:152px;" width="14" height="14" viewBox="0 0 14 14"><path d="M11.8 4.2 A5.4 5.4 0 1 0 12.4 8.6" fill="none" stroke="#f0f0f0" stroke-width="1.7"/><path d="M8.3 5.6 H13.4 V0.6 Z" fill="#f0f0f0"/></svg>
<div class="btn" style="left:1024px;top:144.5px;width:83.5px;height:28.5px;"></div>
<svg style="left:1033px;top:152px;" width="13" height="14" viewBox="0 0 13 14"><path d="M0.5 2 H4 L5 3.2 H8 V11 H0.5 Z" fill="#e6e6e6"/><rect x="4.2" y="4.5" width="8.3" height="9" rx="1" fill="#e6e6e6" stroke="#363636" stroke-width="0.8"/></svg>
<span class="f" style="left:1005.7px;top:156px;font-size:9.5px;line-height:12px;transform:scaleX(0.875);font-weight:bold;color:#363636;left:1037.6px;">A</span>
<span class="f" style="left:1048.8px;top:152px;font-size:11px;line-height:14px;transform:scaleX(0.933);color:#e6e6e6;">Collections</span>
<span class="f" style="left:841.2px;top:174px;font-size:11px;line-height:14px;transform:scaleX(0.925);">All Fonts</span>
<div style="left:841.5px;top:197.5px;width:161.5px;height:1px;background:#3a3a3a;"></div>
<div style="left:841.5px;top:204.5px;width:161.5px;height:179px;background:#2a2a2a;overflow:hidden"></div>
<div style="left:842px;top:204.5px;width:160.5px;height:20.8px;background:#2a5db0;"></div>
<span class="f" style="left:845.5px;top:207px;font-size:11.5px;line-height:15px;transform:scaleX(0.828);font-weight:bold;font-style:italic;color:#fff;">sans-serif</span>
<div style="left:845.5px;top:214.20000000000002px;width:45px;height:1.3px;background:#d02040;"></div>
<div style="left:896.6px;top:205.20000000000002px;width:104.89999999999998px;height:20px;overflow:hidden"><span class="f" style="left:0;top:0;font-size:11.5px;line-height:20px;font-family:'DejaVu Sans Condensed','DejaVu Sans',sans-serif;font-weight:normal;color:#7290cc;transform:scaleX(0.93)">AaBbCcIiPpQq12369$€¢</span></div>
<span class="f" style="left:845.5px;top:230px;font-size:11px;line-height:14px;transform:scaleX(0.901);color:#ececec;">Agency FB</span>
<div style="left:900px;top:227.8px;width:101.5px;height:20px;overflow:hidden"><span class="f" style="left:0;top:0;font-size:11.5px;line-height:20px;font-family:'DejaVu Sans Condensed','DejaVu Sans',sans-serif;font-weight:normal;color:#7d7d7d;transform:scaleX(0.93)">AaBbCcIiPpQq12369$€¢</span></div>
<span class="f" style="left:845.5px;top:250px;font-size:11px;line-height:14px;transform:scaleX(0.937);color:#ececec;">Algerian</span>
<div style="left:889.3px;top:247.60000000000002px;width:112.20000000000005px;height:20px;overflow:hidden"><span class="f" style="left:0;top:0;font-size:11.5px;line-height:20px;font-family:'DejaVu Sans Condensed','DejaVu Sans',sans-serif;font-weight:normal;color:#7d7d7d;transform:scaleX(0.93)">AaBbCcIiPpQq12369$€¢?.</span></div>
<span class="f" style="left:845.3px;top:270px;font-size:11px;line-height:14px;transform:scaleX(0.950);color:#ececec;">Arial</span>
<div style="left:872px;top:267.3px;width:129.5px;height:20px;overflow:hidden"><span class="f" style="left:0;top:0;font-size:11.5px;line-height:20px;font-family:'Liberation Sans',sans-serif;font-weight:normal;color:#7d7d7d;transform:scaleX(0.93)">AaBbCcIiPpQq12369$€¢?.;/()</span></div>
<span class="f" style="left:845.3px;top:290px;font-size:11px;line-height:14px;transform:scaleX(0.940);color:#ececec;">Arial Rounded MT Bold</span>
<div style="left:957.8px;top:287.5px;width:43.700000000000045px;height:20px;overflow:hidden"><span class="f" style="left:0;top:0;font-size:11.5px;line-height:20px;font-family:'Liberation Sans',sans-serif;font-weight:normal;color:#7d7d7d;transform:scaleX(0.93)">AaBbCcIiPpQq</span></div>
<span class="f" style="left:845.3px;top:310px;font-size:11px;line-height:14px;transform:scaleX(0.949);color:#ececec;">Bahnschrift</span>
<div style="left:903.6px;top:307.8px;width:97.89999999999998px;height:20px;overflow:hidden"><span class="f" style="left:0;top:0;font-size:11px;line-height:20px;font-family:'DejaVu Sans Condensed','DejaVu Sans',sans-serif;font-weight:normal;color:#7d7d7d;transform:scaleX(0.93)">AaBbCcIiPpQq12369$€¢</span></div>
<span class="f" style="left:845.3px;top:331px;font-size:11px;line-height:14px;transform:scaleX(0.896);color:#ececec;">Baskerville Old Face</span>
<div style="left:941px;top:328.40000000000003px;width:60.5px;height:20px;overflow:hidden"><span class="f" style="left:0;top:0;font-size:11.5px;line-height:20px;font-family:'Liberation Serif',serif;font-weight:normal;color:#7d7d7d;transform:scaleX(0.93)">AaBbCcIiPpQq123</span></div>
<span class="f" style="left:845.3px;top:351px;font-size:11px;line-height:14px;transform:scaleX(0.889);color:#ececec;">Bauhaus 93</span>
<div style="left:903.6px;top:348.3px;width:97.89999999999998px;height:20px;overflow:hidden"><span class="f" style="left:0;top:0;font-size:10.5px;line-height:20px;font-family:'DejaVu Sans',sans-serif;font-weight:bold;color:#7d7d7d;transform:scaleX(0.93)">AaBbCcIiPpQq12369$</span></div>
<span class="f" style="left:845.3px;top:371px;font-size:11px;line-height:14px;transform:scaleX(0.923);color:#ececec;">Bell MT</span>
<div style="left:885.2px;top:368.7px;width:116.29999999999995px;height:20px;overflow:hidden"><span class="f" style="left:0;top:0;font-size:10.5px;line-height:20px;font-family:'Liberation Serif',serif;font-weight:normal;color:#7d7d7d;transform:scaleX(0.93)">AaBbCcIiPpQq12369$€¢?.;/()</span></div>
<div style="left:1007px;top:197.5px;width:143px;height:152px;background:#2c2c2c;border:1px solid #222"></div>
<div style="left:1006px;top:196px;width:24px;height:4px;background:#2e2e2e;"></div>
<span class="f" style="left:1006.6px;top:189px;font-size:11px;line-height:14px;transform:scaleX(0.896);">Style</span>
<div style="left:841px;top:196px;width:53px;height:4px;background:#2e2e2e;"></div>
<span class="f" style="left:841px;top:189px;font-size:11px;line-height:14px;transform:scaleX(0.954);">Font family</span>
<div style="left:1008px;top:226px;width:141px;height:1px;background:#555;"></div>
<div style="left:1062.5px;top:199px;width:1px;height:27px;background:#444;"></div>
<span class="f" style="left:1013px;top:207px;font-size:11px;line-height:14px;transform:scaleX(0.796);color:#9a9a9a;">CSS</span>
<span class="f" style="left:1068.7px;top:207px;font-size:11px;line-height:14px;transform:scaleX(0.871);color:#9a9a9a;">Face</span>
<span class="f" style="left:1066.6px;top:230px;font-size:11px;line-height:14px;transform:scaleX(0.928);color:#f0f0f0;">Normal</span>
<span class="f" style="left:1066.6px;top:249px;font-size:11px;line-height:14px;transform:scaleX(1.035);font-style:italic;color:#f0f0f0;">Italic</span>
<span class="f" style="left:1066.6px;top:268px;font-size:11px;line-height:14px;transform:scaleX(0.941);font-weight:bold;color:#f8f8f8;">Bold</span>
<span class="f" style="left:1067.5px;top:287px;font-size:11px;line-height:14px;transform:scaleX(1.056);font-weight:bold;font-style:italic;color:#f8f8f8;">Bold Italic</span>
<span class="f" style="left:1012.7px;top:361px;font-size:11px;line-height:14px;transform:scaleX(0.881);">Font size</span>
<div class="btn" style="left:1062px;top:355px;width:57px;height:28.5px;border-radius:4px 0 0 4px;background:#2a2a2a"></div>
<div class="btn" style="left:1118px;top:355px;width:31.5px;height:28.5px;border-radius:0 4px 4px 0"></div>
<span class="f" style="left:1069.5px;top:361px;font-size:11px;line-height:14px;transform:scaleX(0.801);">64</span>
<svg style="left:1128.5px;top:366.5px;" width="11" height="6" viewBox="0 0 11 6"><path d="M0 0 H11 L5.5 6 Z" fill="#f2f2f2"/></svg>
<span class="f" style="left:887.3px;top:430px;font-size:78px;line-height:101px;transform:scaleX(0.968);font-family:'DejaVu Sans Condensed','DejaVu Sans',sans-serif;color:#f3f3f3;">strong</span>
<div class="btn" style="left:837px;top:538px;width:97px;height:28.5px;"></div>
<span class="f" style="left:855px;top:545px;font-size:11px;line-height:14px;transform:scaleX(0.917);color:#e6e6e6;">Set as default</span>
<div class="btn" style="left:1056.5px;top:538px;width:97.5px;height:28.5px;background:#313131"></div>
<span class="f" style="left:1091.8px;top:545px;font-size:11px;line-height:14px;transform:scaleX(0.952);color:#858585;">Apply</span>
<div style="left:1157px;top:79px;width:41px;height:499px;background:#353535;"></div>
<svg style="left:1171px;top:90px;" width="15" height="15" viewBox="0 0 15 15"><path d="M2 1.5 H8.5 L12 5 V13.5 H2 Z" fill="none" stroke="#f2f2f2" stroke-width="1.8" stroke-linejoin="round"/><path d="M8 6.5 V10 H11" fill="none" stroke="#f2f2f2" stroke-width="1.2"/><circle cx="12.5" cy="2" r="1.8" fill="#2ca02c"/></svg>
<svg style="left:1171px;top:121px;" width="15" height="13" viewBox="0 0 15 13"><path d="M0.8 1 H5.5 L6.8 2.8 H12 V5 H3.5 L0.8 11.5 Z" fill="#f2f2f2"/><path d="M4.2 6 H14.6 L12 12.2 H1.6 Z" fill="#f2f2f2"/></svg>
<svg style="left:1171px;top:150px;" width="15" height="16" viewBox="0 0 15 16"><path d="M7.5 0.5 V6.5 M4.5 4 L7.5 7.5 L10.5 4" fill="none" stroke="#2ca02c" stroke-width="2"/><path d="M0.8 14.5 V10.5 L3 7.5 H4.5 L3 10.5 H12 L10.5 7.5 H12 L14.2 10.5 V14.5 Z" fill="#f2f2f2"/><path d="M3 12.6 H12" stroke="#353535" stroke-width="1"/></svg>
<svg style="left:1171px;top:181px;" width="15" height="14" viewBox="0 0 15 14"><rect x="3.5" y="0.5" width="8" height="3" fill="#f2f2f2"/><path d="M0.8 4.5 H14.2 V10.5 H11.5 V8 H3.5 V10.5 H0.8 Z" fill="#f2f2f2"/><rect x="4.5" y="9.5" width="6" height="3.8" fill="#f2f2f2"/></svg>
<div style="left:1163px;top:210px;width:32px;height:1px;background:#3a3a3a;"></div>
<svg style="left:1170px;top:224px;" width="16" height="16" viewBox="0 0 16 16"><path d="M5.5 1.5 H11 L14 4.5 V14 H5.5" fill="none" stroke="#f2f2f2" stroke-width="1.8" stroke-linejoin="round"/><path d="M0.5 8.5 H8 M5.5 5.5 L8.5 8.5 L5.5 11.5" fill="none" stroke="#2ca02c" stroke-width="1.8"/></svg>
<svg style="left:1170px;top:254px;" width="17" height="16" viewBox="0 0 17 16"><path d="M9 14 H2 V1.5 H7.5 L10.5 4.5 V7" fill="none" stroke="#f2f2f2" stroke-width="1.8" stroke-linejoin="round"/><path d="M6.5 10 H14 M11.5 7 L14.5 10 L11.5 13" fill="none" stroke="#2ca02c" stroke-width="1.8"/></svg>
<div style="left:1163px;top:283px;width:32px;height:1px;background:#3a3a3a;"></div>
<svg style="left:1171px;top:299px;" width="14" height="13" viewBox="0 0 14 13"><path d="M4 4.5 H9 Q12.5 4.5 12.5 8 Q12.5 11.5 9 11.5 H8" fill="none" stroke="#f2f2f2" stroke-width="1.9"/><path d="M5.5 0.8 L0.8 4.5 L5.5 8.2 Z" fill="#f2f2f2"/></svg>
<svg style="left:1171px;top:330px;" width="14" height="13" viewBox="0 0 14 13"><path d="M10 4.5 H5 Q1.5 4.5 1.5 8 Q1.5 11.5 5 11.5 H6" fill="none" stroke="#7a7a7a" stroke-width="1.9"/><path d="M8.5 0.8 L13.2 4.5 L8.5 8.2 Z" fill="#7a7a7a"/></svg>
<div style="left:1163px;top:356px;width:32px;height:1px;background:#3a3a3a;"></div>
<svg style="left:1171px;top:372px;" width="15" height="15" viewBox="0 0 15 15"><rect x="0.8" y="0.8" width="8.5" height="8.5" fill="#f2f2f2"/><rect x="5" y="5" width="9.2" height="9.2" fill="#f2f2f2" stroke="#353535" stroke-width="1.2"/></svg>
<svg style="left:1171px;top:403px;" width="15" height="15" viewBox="0 0 15 15"><path d="M2.5 0.8 L10.5 10.5 M12.5 0.8 L4.5 10.5" stroke="#f2f2f2" stroke-width="1.6"/><circle cx="3.3" cy="11.8" r="2.3" fill="none" stroke="#f2f2f2" stroke-width="1.5"/><circle cx="11.7" cy="11.8" r="2.3" fill="none" stroke="#f2f2f2" stroke-width="1.5"/></svg>
<svg style="left:1171px;top:433px;" width="14" height="16" viewBox="0 0 14 16"><path d="M0.8 2 H13.2 V15 H0.8 Z" fill="#f2f2f2"/><rect x="4" y="0.5" width="6" height="3" fill="#f2f2f2" stroke="#353535" stroke-width="0.8"/><rect x="3.2" y="5.5" width="7.6" height="7.5" fill="#8a8a8a" stroke="#353535" stroke-width="0.8"/></svg>
<div style="left:1163px;top:460px;width:32px;height:1px;background:#3a3a3a;"></div>
<svg style="left:1170px;top:475px;" width="18" height="18" viewBox="0 0 18 18"><path d="M12.5 12.5 L16 16" stroke="#f2f2f2" stroke-width="2.8" stroke-linecap="round"/><circle cx="8.7" cy="8.7" r="6.2" fill="#f2f2f2"/><rect x="5.7" y="5.7" width="6" height="6" fill="#dedede" stroke="#9a9a9a" stroke-width="1" stroke-dasharray="1.4 1"/></svg>
<svg style="left:1170px;top:506px;" width="18" height="18" viewBox="0 0 18 18"><path d="M12.5 12.5 L16 16" stroke="#f2f2f2" stroke-width="2.8" stroke-linecap="round"/><circle cx="8.7" cy="8.5" r="6.2" fill="#f2f2f2"/><circle cx="7.3" cy="6.8" r="2.1" fill="#3a3a3a"/><rect x="8" y="7.8" width="4" height="4" fill="#1e1e1e" stroke="#f2f2f2" stroke-width="0.8"/></svg>
<svg style="left:1175px;top:552px;" width="6" height="11" viewBox="0 0 6 11"><path d="M0 0 V11 L6 5.5 Z" fill="#f2f2f2"/></svg>
<div style="left:0px;top:578px;width:1198px;height:29px;background:#353535;"></div>
<div style="left:0px;top:578px;width:28.5px;height:29px;background:#fff;"></div>
<svg style="left:0px;top:578px;" width="28.5" height="29" viewBox="0 0 28.5 29"><circle cx="14" cy="14.5" r="8" fill="none" stroke="#b8bcc4" stroke-width="1.6"/><path d="M1.5 2 L27 27.5 M27 2 L1.5 27.5" stroke="#b8283c" stroke-width="1.8"/></svg>
<div style="left:29px;top:578px;width:29.5px;height:29px;background:#000;"></div>
<div style="left:38.5px;top:587px;width:10px;height:10px;background:#b4b4b4;border-radius:5px"></div>
<div style="left:59px;top:578px;width:29.5px;height:29px;background:#808080;"></div>
<div style="left:89px;top:578px;width:29.5px;height:29px;background:#fff;"></div>
<svg style="left:0px;top:592.8px;" width="1198" height="14.2" viewBox="0 0 1198 14.2"><rect x="119.60" y="0" width="14.02" height="14.2" fill="#1a1a1a"/><rect x="134.52" y="0" width="14.02" height="14.2" fill="#303030"/><rect x="149.44" y="0" width="14.02" height="14.2" fill="#4d4d4d"/><rect x="164.36" y="0" width="14.02" height="14.2" fill="#666666"/><rect x="179.28" y="0" width="14.02" height="14.2" fill="#808080"/><rect x="194.20" y="0" width="14.02" height="14.2" fill="#a0a0a0"/><rect x="209.12" y="0" width="14.02" height="14.2" fill="#cccccc"/><rect x="224.04" y="0" width="14.02" height="14.2" fill="#e6e6e6"/><rect x="238.96" y="0" width="14.02" height="14.2" fill="#ececec"/><rect x="253.88" y="0" width="14.02" height="14.2" fill="#f2f2f2"/><rect x="268.80" y="0" width="14.02" height="14.2" fill="#ffffff"/><rect x="283.72" y="0" width="14.02" height="14.2" fill="#800000"/><rect x="298.64" y="0" width="14.02" height="14.2" fill="#ff0000"/><rect x="313.56" y="0" width="14.02" height="14.2" fill="#808000"/><rect x="328.48" y="0" width="14.02" height="14.2" fill="#ffff00"/><rect x="343.40" y="0" width="14.02" height="14.2" fill="#008000"/><rect x="358.32" y="0" width="14.02" height="14.2" fill="#00ff00"/><rect x="373.24" y="0" width="14.02" height="14.2" fill="#008080"/><rect x="388.16" y="0" width="14.02" height="14.2" fill="#00ffff"/><rect x="403.08" y="0" width="14.02" height="14.2" fill="#000080"/><rect x="418.00" y="0" width="14.02" height="14.2" fill="#0000ff"/><rect x="432.92" y="0" width="14.02" height="14.2" fill="#800080"/><rect x="447.84" y="0" width="14.02" height="14.2" fill="#ff00ff"/><rect x="462.76" y="0" width="14.02" height="14.2" fill="#2b0000"/><rect x="477.68" y="0" width="14.02" height="14.2" fill="#550000"/><rect x="492.60" y="0" width="14.02" height="14.2" fill="#800000"/><rect x="507.52" y="0" width="14.02" height="14.2" fill="#aa0000"/><rect x="522.44" y="0" width="14.02" height="14.2" fill="#d40000"/><rect x="537.36" y="0" width="14.02" height="14.2" fill="#ff0000"/><rect x="552.28" y="0" width="14.02" height="14.2" fill="#ff2a2a"/><rect x="567.20" y="0" width="14.02" height="14.2" fill="#ff5555"/><rect x="582.12" y="0" width="14.02" height="14.2" fill="#ff8080"/><rect x="597.04" y="0" width="14.02" height="14.2" fill="#ffaaaa"/><rect x="611.96" y="0" width="14.02" height="14.2" fill="#ffd5d5"/><rect x="626.88" y="0" width="14.02" height="14.2" fill="#280b0b"/><rect x="641.80" y="0" width="14.02" height="14.2" fill="#501616"/><rect x="656.72" y="0" width="14.02" height="14.2" fill="#782121"/><rect x="671.64" y="0" width="14.02" height="14.2" fill="#a02c2c"/><rect x="686.56" y="0" width="14.02" height="14.2" fill="#c83737"/><rect x="701.48" y="0" width="14.02" height="14.2" fill="#d35f5f"/><rect x="716.40" y="0" width="14.02" height="14.2" fill="#de8787"/><rect x="731.32" y="0" width="14.02" height="14.2" fill="#e9afaf"/><rect x="746.24" y="0" width="14.02" height="14.2" fill="#f4d7d7"/><rect x="761.16" y="0" width="14.02" height="14.2" fill="#241c1c"/><rect x="776.08" y="0" width="14.02" height="14.2" fill="#483737"/><rect x="791.00" y="0" width="14.02" height="14.2" fill="#6c5353"/><rect x="805.92" y="0" width="14.02" height="14.2" fill="#916f6f"/><rect x="820.84" y="0" width="14.02" height="14.2" fill="#ac9393"/><rect x="835.76" y="0" width="14.02" height="14.2" fill="#c8b7b7"/><rect x="850.68" y="0" width="14.02" height="14.2" fill="#e3dbdb"/><rect x="865.60" y="0" width="14.02" height="14.2" fill="#2b1100"/><rect x="880.52" y="0" width="14.02" height="14.2" fill="#552200"/><rect x="895.44" y="0" width="14.02" height="14.2" fill="#803300"/><rect x="910.36" y="0" width="14.02" height="14.2" fill="#aa4400"/><rect x="925.28" y="0" width="14.02" height="14.2" fill="#d45500"/><rect x="940.20" y="0" width="14.02" height="14.2" fill="#ff6600"/><rect x="955.12" y="0" width="14.02" height="14.2" fill="#ff7f2a"/><rect x="970.04" y="0" width="14.02" height="14.2" fill="#ff9955"/><rect x="984.96" y="0" width="14.02" height="14.2" fill="#ffb380"/><rect x="999.88" y="0" width="14.02" height="14.2" fill="#ffccaa"/><rect x="1014.80" y="0" width="14.02" height="14.2" fill="#ffe6d5"/><rect x="1029.72" y="0" width="14.02" height="14.2" fill="#28170b"/><rect x="1044.64" y="0" width="14.02" height="14.2" fill="#502d16"/><rect x="1059.56" y="0" width="14.02" height="14.2" fill="#784421"/><rect x="1074.48" y="0" width="14.02" height="14.2" fill="#a05a2c"/><rect x="1089.40" y="0" width="14.02" height="14.2" fill="#c87137"/><rect x="1104.32" y="0" width="14.02" height="14.2" fill="#d38d5f"/></svg>
<svg style="left:1133px;top:589.5px;" width="11" height="7" viewBox="0 0 11 7"><path d="M1 6 L5.5 1.2 L10 6" fill="none" stroke="#f2f2f2" stroke-width="1.7"/></svg>
<svg style="left:1160px;top:588.5px;" width="11" height="7" viewBox="0 0 11 7"><path d="M1 1 L5.5 5.8 L10 1" fill="none" stroke="#f2f2f2" stroke-width="1.7"/></svg>
<div class="btn" style="left:1180.5px;top:583.5px;width:15.5px;height:23.5px;background:#2a2a2a;border-color:#1e1e1e"></div>
<div style="left:1183px;top:590.2px;width:11px;height:1.8px;background:#f2f2f2;"></div>
<div style="left:1183px;top:594.7px;width:11px;height:1.8px;background:#f2f2f2;"></div>
<div style="left:1183px;top:599px;width:11px;height:1.8px;background:#f2f2f2;"></div>
<div style="left:0px;top:607px;width:1198px;height:29px;background:#353535;"></div>
<span class="f" style="left:16px;top:609px;font-size:11px;line-height:14px;transform:scaleX(0.877);">Fill:</span>
<span class="f" style="left:1px;top:623px;font-size:11px;line-height:14px;transform:scaleX(0.861);">Stroke:</span>
<div style="left:46px;top:609px;width:43.5px;height:13.5px;background:#000;border-radius:3px"></div>
<span class="f" style="left:56px;top:623px;font-size:11px;line-height:14px;transform:scaleX(0.875);font-style:italic;">None</span>
<span class="f" style="left:98.5px;top:623px;font-size:11px;line-height:14px;transform:scaleX(0.854);">0.265</span>
<span class="f" style="left:129px;top:616px;font-size:11px;line-height:14px;transform:scaleX(0.775);">O:</span>
<div class="btn" style="left:141.5px;top:609.5px;width:61px;height:30px;background:#2d2d2d;"></div>
<span class="f" style="left:147px;top:616px;font-size:11px;line-height:14px;transform:scaleX(0.817);">100</span>
<div style="left:176px;top:623px;width:10.5px;height:1.8px;background:#f2f2f2;"></div>
<div style="left:192px;top:623px;width:9px;height:1.5px;background:#6a6a6a;"></div>
<div style="left:196px;top:618.5px;width:1.5px;height:10.5px;background:#6a6a6a;"></div>
<div style="left:227.5px;top:616px;width:3px;height:15.5px;background:#3f6fc8;border-radius:1px"></div>
<span class="f" style="left:235.3px;top:616px;font-size:11px;line-height:14px;transform:scaleX(0.864);">Layer 1</span>
<svg style="left:285.5px;top:615px;" width="15" height="13" viewBox="0 0 15 13"><path d="M1 7.5 Q7.5 0.5 14 7.5 Q7.5 14 1 7.5 Z" fill="none" stroke="#f2f2f2" stroke-width="1.6"/><circle cx="7.5" cy="7.6" r="2.3" fill="#f2f2f2"/><path d="M3.5 2.5 L2.5 0.8 M7.5 1.6 V0 M11.5 2.5 L12.5 0.8" stroke="#f2f2f2" stroke-width="1.2"/></svg>
<svg style="left:319px;top:616px;" width="13" height="14" viewBox="0 0 13 14"><path d="M6.5 6.5 V3.8 a2.6 2.6 0 0 1 5.2 0 V4.5" fill="none" stroke="#f2f2f2" stroke-width="1.5"/><rect x="0.5" y="6.3" width="9" height="7.2" rx="0.8" fill="#f2f2f2"/></svg>
<span class="f" style="left:943.7px;top:609px;font-size:11px;line-height:14px;transform:scaleX(0.770);">X:</span>
<span class="f" style="left:964.7px;top:609px;font-size:11px;line-height:14px;transform:scaleX(0.841);">149.96</span>
<span class="f" style="left:943.7px;top:623px;font-size:11px;line-height:14px;transform:scaleX(0.817);">Y:</span>
<span class="f" style="left:969.7px;top:623px;font-size:11px;line-height:14px;transform:scaleX(0.846);">77.61</span>
<span class="f" style="left:1002px;top:616px;font-size:11px;line-height:14px;transform:scaleX(0.788);">Z:</span>
<div class="btn" style="left:1010.3px;top:610px;width:77.5px;height:30px;background:#2d2d2d;"></div>
<span class="f" style="left:1020px;top:616px;font-size:11px;line-height:14px;transform:scaleX(0.895);">45%</span>
<div style="left:1052px;top:623px;width:11px;height:1.8px;background:#f2f2f2;"></div>
<div style="left:1070.8px;top:623px;width:11px;height:1.8px;background:#f2f2f2;"></div>
<div style="left:1075.4px;top:618.4px;width:1.8px;height:11px;background:#f2f2f2;"></div>
<span class="f" style="left:1096.7px;top:616px;font-size:11px;line-height:14px;transform:scaleX(0.664);">R:</span>
<div class="btn" style="left:1105.3px;top:610px;width:81.5px;height:30px;background:#2d2d2d;"></div>
<span class="f" style="left:1117.5px;top:616px;font-size:11px;line-height:14px;transform:scaleX(0.872);">0.00°</span>
<div style="left:1152px;top:623px;width:11px;height:1.8px;background:#f2f2f2;"></div>
<div style="left:1170.8px;top:623px;width:11px;height:1.8px;background:#f2f2f2;"></div>
<div style="left:1175.4px;top:618.4px;width:1.8px;height:11px;background:#f2f2f2;"></div>
<svg style="left:11px;top:54px;" width="13" height="13" viewBox="0 0 13 13"><path d="M0 0.5 H4.2 L5.4 2 H12.6 V12.4 H0 Z" fill="#f4f4f4"/><rect x="3.6" y="3.6" width="9" height="9.2" fill="#343434"/><text x="8.1" y="12.4" font-size="10.5" font-weight="bold" text-anchor="middle" font-family="Liberation Sans, sans-serif" fill="#f4f4f4">A</text><path d="M3.1 13.1 H13.1 V3.4" fill="none" stroke="#f4f4f4" stroke-width="0.9"/></svg>
<svg style="left:42.5px;top:53px;" width="14" height="14" viewBox="0 0 14 14"><path d="M12.2 4.3 A5.7 5.7 0 1 0 12.7 9.2" fill="none" stroke="#f4f4f4" stroke-width="1.9"/><path d="M8 6 H13.6 V0.4 Z" fill="#f4f4f4"/></svg>
<svg style="left:191.5px;top:52px;" width="16" height="14" viewBox="0 0 16 14"><path d="M8 0.6 L15.4 13.4 H0.6 Z" fill="#f4f4f4" stroke="#f4f4f4" stroke-width="1" stroke-linejoin="round"/><path d="M8 4.3 V9.2" stroke="#303030" stroke-width="1.7"/><circle cx="8" cy="11.3" r="1" fill="#303030"/></svg>
<span class="f" style="left:790.6px;top:51px;font-size:10.5px;line-height:14px;transform:scaleX(0.870);font-weight:bold;color:#8a8a8a;">A</span>
<span class="f" style="left:797.2px;top:51px;font-size:10.5px;line-height:14px;transform:scaleX(0.870);font-weight:bold;color:#f4f4f4;">A</span>
<div style="left:790.6px;top:63.2px;width:13.2px;height:1.1px;background:#c8c8c8;"></div>
<div style="left:793.7px;top:52.6px;width:6.3px;height:1.3px;background:#259425;"></div>
<span class="f" style="left:863px;top:48px;font-size:9.5px;line-height:12px;transform:scaleX(1.166);font-weight:bold;color:#f4f4f4;">A</span>
<svg style="left:862px;top:51px;" width="21" height="18" viewBox="0 0 21 18"><g stroke="#259425" stroke-width="1.7" fill="none"><path d="M11 2.3 H17.5"/><path d="M1 9 H17.5"/><path d="M1 16 H17.5"/></g><g fill="#259425"><path d="M16.5 0.3 L20 2.3 L16.5 4.3 Z"/><path d="M16.5 7 L20 9 L16.5 11 Z"/><path d="M16.5 14 L20 16 L16.5 18 Z"/></g></svg>
<span class="f" style="left:970.3px;top:48px;font-size:9.5px;line-height:12px;transform:scaleX(1.166);font-weight:bold;color:#f4f4f4;">A</span>
<svg style="left:969.3px;top:51px;" width="21" height="18" viewBox="0 0 21 18"><g stroke="#259425" stroke-width="1.7" fill="none"><path d="M11 2.3 H17.5"/><path d="M1 9 H17.5"/><path d="M1 16 H17.5"/></g><g fill="#259425"><path d="M16.5 0.3 L20 2.3 L16.5 4.3 Z"/><path d="M16.5 7 L20 9 L16.5 11 Z"/><path d="M16.5 14 L20 16 L16.5 18 Z"/></g></svg>
<svg style="left:917.5px;top:52px;" width="6" height="16" viewBox="0 0 6 16"><path d="M3 0 V12" stroke="#2a8a2a" stroke-width="1.5"/><path d="M0 11 H6 L3 16 Z" fill="#2a8a2a"/></svg>
<span class="f" style="left:925.5px;top:49.5px;font-size:9.5px;line-height:11px;color:#9a9a9a;font-family:'Liberation Sans','Noto Sans CJK SC',sans-serif">字</span>
<span class="f" style="left:926.5px;top:59.5px;font-size:9.5px;line-height:11px;color:#9a9a9a;font-weight:bold;transform-origin:50% 50%;transform:rotate(90deg)">A</span>
<svg style="left:1139px;top:52px;" width="15" height="16" viewBox="0 0 15 16"><path d="M5 2.2 H7.5 A5.8 5.8 0 0 1 7.5 13.8 H5" fill="none" stroke="#f4f4f4" stroke-width="2.6"/><circle cx="4.2" cy="2.2" r="1.5" fill="#259425"/><circle cx="4.2" cy="13.8" r="1.5" fill="#259425"/><path d="M3 6.2 Q1 6 1.2 7.2 Q1.4 8 2.2 8.2 Q3.2 8.6 2.6 9.6 Q2 10.2 0.8 9.8" fill="none" stroke="#dcdcdc" stroke-width="0.9"/></svg>
<svg style="left:91.7px;top:69.4px;" width="37.6" height="52.0" viewBox="0 0 37.6 52.0"><path d="M18.6 4.0 L33.6 25.0 L26.4 25.0 L26.4 48.0 L11.0 48.0 L11.0 25.0 L4.0 25.0 Z" fill="none" stroke="#e41f28" stroke-width="4.2" stroke-linejoin="round"/></svg>
<svg style="left:378.4px;top:66.2px;" width="39.6" height="54.0" viewBox="0 0 39.6 54.0"><path d="M19.6 4.0 L35.6 26.8 L28.5 26.8 L28.5 50.0 L11.1 50.0 L11.1 26.8 L4.0 26.8 Z" fill="none" stroke="#e41f28" stroke-width="4.2" stroke-linejoin="round"/></svg>
<svg style="left:677.9px;top:70.9px;" width="35.7" height="55.2" viewBox="0 0 35.7 55.2"><path d="M17.9 4.0 L31.7 27.4 L25.3 27.4 L25.3 51.2 L10.9 51.2 L10.9 27.4 L4.0 27.4 Z" fill="none" stroke="#e41f28" stroke-width="4.2" stroke-linejoin="round"/></svg>
<svg style="left:526.9px;top:532.6px;" width="61.3" height="57.7" viewBox="0 0 61.3 57.7"><path d="M30.5 53.7 L57.3 28.8 L43.9 28.8 L43.9 4.0 L16.6 4.0 L16.6 28.8 L4.0 28.8 Z" fill="none" stroke="#e41f28" stroke-width="4.6" stroke-linejoin="round"/></svg>
<span class="f" style="left:83.3px;top:125px;font-size:16.5px;line-height:21px;transform:scaleX(1.106);font-weight:bold;color:#df2831;">Font name</span>
<span class="f" style="left:368px;top:124px;font-size:16.5px;line-height:21px;transform:scaleX(1.061);font-weight:bold;color:#df2831;">Font size</span>
<span class="f" style="left:658.8px;top:131px;font-size:16.5px;line-height:21px;transform:scaleX(1.128);font-weight:bold;color:#df2831;">Alignment</span>
<span class="f" style="left:536.3px;top:506px;font-size:16.5px;line-height:21px;transform:scaleX(1.075);font-weight:bold;color:#df2831;">Font color</span>
<div style="left:1198px;top:0px;width:2px;height:636px;background:#fdfdfd;"></div>
</body>
</html>
